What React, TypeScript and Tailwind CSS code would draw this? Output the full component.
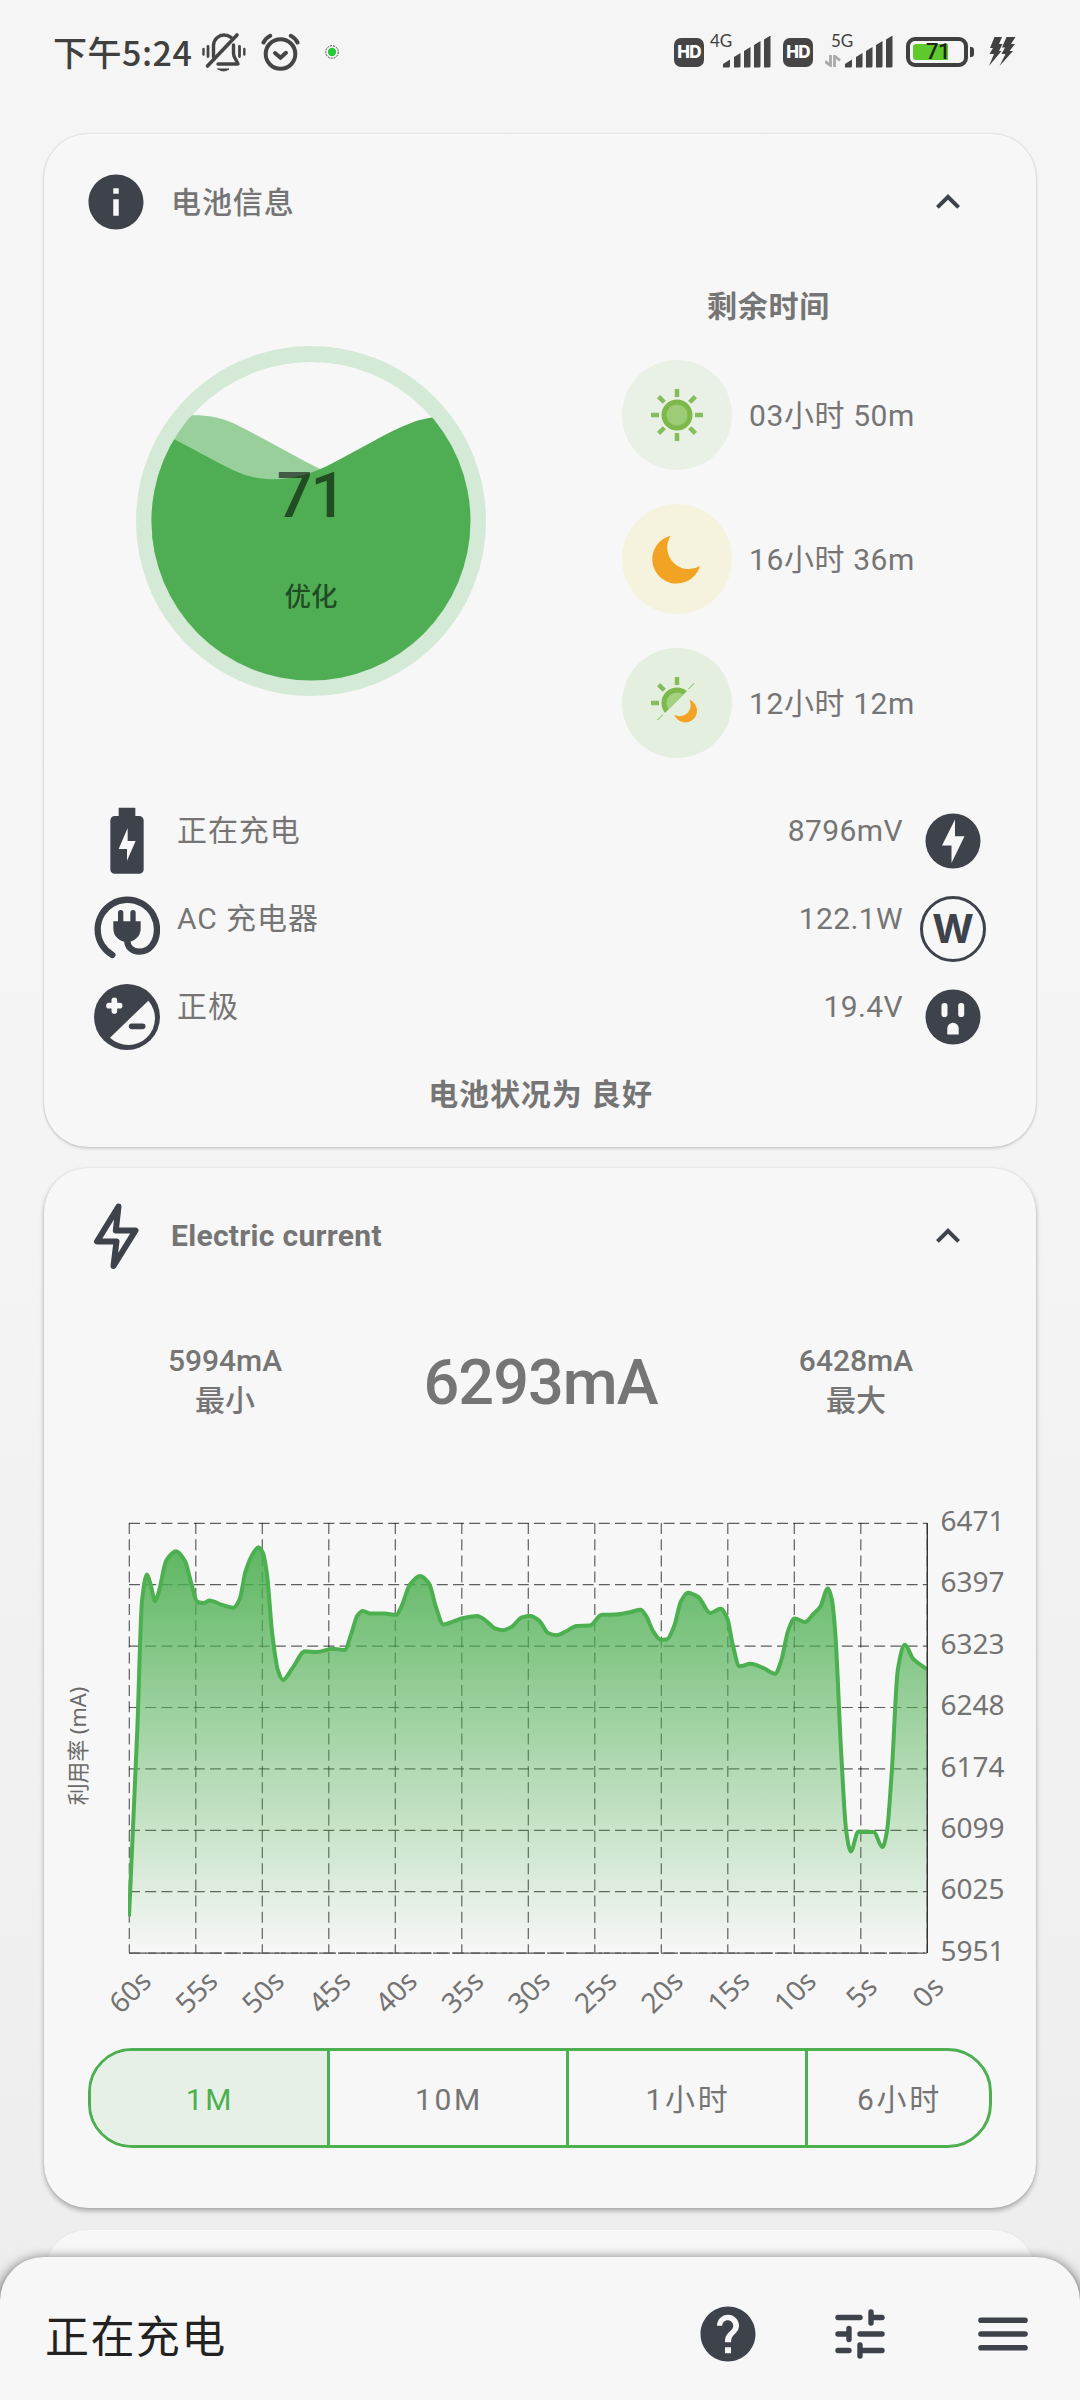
import React from 'react';

type Point = [number, number];

const INK = '#3e424b';

const samples: Point[] = [
  [0, 367], [8.3, 193], [13, 73], [18, 48], [21.5, 57], [26.2, 73], [29.6, 64.7], [37.5, 34.7], [47.2, 26.4],
  [56.1, 35.7], [62.3, 56.4], [68.5, 73.7], [74.4, 74.7], [80.2, 72.4], [93.3, 76.4], [104.3, 79], [110.5, 71.4],
  [116.7, 44.7], [124.3, 28], [129.5, 22.7], [134, 28], [138, 48], [143.2, 103], [149.1, 138], [153.9, 146.4],
  [163.9, 134.7], [176, 119.7], [188, 120.4], [203.5, 117.4], [215.6, 118.4], [222.4, 103], [228.3, 86.4],
  [233.8, 82], [241.4, 84.4], [255.2, 84.4], [267.2, 85.7], [272.4, 78], [281, 57.4], [291, 49.4], [300, 56.4],
  [306.8, 78], [314.4, 94.7], [324, 92], [334.4, 88.7], [348.1, 86.7], [358.5, 92.4], [365.3, 98], [374, 100],
  [382.6, 97], [392.9, 88], [401.5, 86.7], [410.5, 91.4], [419, 102.6], [427, 104.7], [437.2, 101], [447.5, 96],
  [460.7, 95.7], [472.8, 85.7], [486.6, 85.4], [502, 83], [511.4, 81], [516.9, 86.4], [524.4, 101.4], [532, 109],
  [538.2, 108.4], [545.1, 96.4], [552, 73], [558.9, 65], [569.2, 69], [581.3, 84], [591.6, 80], [598.5, 89.7],
  [603.6, 113], [610.5, 133.7], [621.5, 131.4], [634.6, 135.4], [646, 140.7], [651.8, 129.7], [659.4, 99.7],
  [665.6, 89], [676, 92.4], [684.6, 84.7], [691.4, 78], [698.7, 61], [702.8, 71.4], [706.3, 103], [712.1, 213],
  [717.3, 288], [721.8, 306.4], [729.3, 288], [744.8, 288.4], [753.4, 302.4], [757.9, 288], [762.7, 233],
  [768.9, 136.4], [775.8, 113.7], [784.4, 127], [798, 136.4],
];

/** Monotone cubic path through the samples, so peaks never overshoot. */
function smoothPath(p: Point[]): string {
  const n = p.length;
  const slope = (i: number) => (p[i + 1][1] - p[i][1]) / (p[i + 1][0] - p[i][0]);
  const m = p.map((_, i) => {
    if (i === 0) return slope(0);
    if (i === n - 1) return slope(n - 2);
    const a = slope(i - 1);
    const b = slope(i);
    return a * b <= 0 ? 0 : (2 * a * b) / (a + b);
  });
  let d = `M${p[0][0]} ${p[0][1]}`;
  for (let i = 0; i < n - 1; i++) {
    const h = (p[i + 1][0] - p[i][0]) / 3;
    d += `C${p[i][0] + h} ${p[i][1] + m[i] * h} ${p[i + 1][0] - h} ${p[i + 1][1] - m[i + 1] * h} ${p[i + 1][0]} ${p[i + 1][1]}`;
  }
  return d;
}

const PLOT_HEIGHT = 429.8;
const ROW = PLOT_HEIGHT / 7;
const linePath = smoothPath(samples.map(([x, y]): Point => [x, (y * PLOT_HEIGHT) / 401]));
const yLabels = ['6471', '6397', '6323', '6248', '6174', '6099', '6025', '5951'];
const xLabels = ['60s', '55s', '50s', '45s', '40s', '35s', '30s', '25s', '20s', '15s', '10s', '5s', '0s'];

function Chart() {
  return (
    <svg className="block overflow-visible" width="992" height="550" viewBox="-85 -40 992 550">
      <defs>
        <linearGradient id="area" gradientUnits="userSpaceOnUse" x1="0" y1="0" x2="0" y2={PLOT_HEIGHT}>
          <stop offset="0" stopColor="#4caf50" stopOpacity="0.95" />
          <stop offset="1" stopColor="#4caf50" stopOpacity="0" />
        </linearGradient>
        <clipPath id="plot">
          <rect x="-1" y="0" width="799.5" height="431" />
        </clipPath>
      </defs>
      <g stroke="#000" strokeOpacity="0.62" strokeWidth="1.2" strokeDasharray="11 5.2">
        {xLabels.map((l, i) => (
          <line key={l} x1={i * 66.5 + 0.3} y1="0" x2={i * 66.5 + 0.3} y2={PLOT_HEIGHT} />
        ))}
        {yLabels.map((l, i) => (
          <line key={l} x1="0" y1={i * ROW + 0.3} x2="798" y2={i * ROW + 0.3} />
        ))}
      </g>
      <path d={`${linePath}L798 ${PLOT_HEIGHT}L0 ${PLOT_HEIGHT}Z`} fill="url(#area)" />
      <path d={linePath} fill="none" stroke="#4caf50" strokeWidth="4" strokeLinejoin="round" clipPath="url(#plot)" />
      <path d="M798.3 0V430" fill="none" stroke="#333" strokeWidth="1.4" />
      <path d="M0 430.2H798" fill="none" stroke="#555" strokeWidth="1.2" strokeDasharray="17 2" />
      <g fontFamily="'Noto Sans', sans-serif" fontSize="28" fill="#737373">
        {yLabels.map((l, i) => (
          <text key={l} x="811.5" y={i * ROW + 8}>{l}</text>
        ))}
        {xLabels.map((l, i) => (
          <text key={l} textAnchor="middle" transform={`translate(${i * 66.5 + 8} ${476}) rotate(-45)`}>{l}</text>
        ))}
      </g>
      <text
        transform="translate(-43.5 223) rotate(-90)"
        textAnchor="middle"
        fontFamily="'Noto Sans', 'Noto Sans CJK SC', sans-serif"
        fontSize="21.800"
        fill="#6a6a6a"
      >
        利用率 (mA)
      </text>
    </svg>
  );
}

function Chevron() {
  return (
    <svg width="48" height="48" viewBox="0 0 24 24" fill={INK}>
      <path d="M12 8l-6 6 1.41 1.41L12 10.83l4.59 4.58L18 14z" />
    </svg>
  );
}

function SignalBars() {
  return (
    <svg width="48" height="32" viewBox="0 0 48 32" fill="#454545">
      <path d="M0 31.500V28l7-4.500V30q0 1.500-1.500 1.500z" />
      <path d="M11 31.500V21l6.500-4V30q0 1.500-1.500 1.500H11z" />
      <path d="M21 31.500V15l6.500-4V30q0 1.500-1.500 1.500H21z" />
      <path d="M31 31.500V9l6.500-4V30q0 1.500-1.500 1.500H31z" />
      <path d="M41 31.500V3.500l6.500-4V30q0 1.500-1.500 1.500H41z" />
    </svg>
  );
}

function HdBadge() {
  return (
    <div className="flex h-[29px] w-[30px] items-center justify-center rounded-[7px] bg-[#454545] font-['Inter','Liberation_Sans',sans-serif] text-[17px] font-extrabold leading-none tracking-[-0.8px] text-white">
      HD
    </div>
  );
}

function StatusBar() {
  return (
    <header className="flex h-[104px] items-center justify-between pl-[53px] pr-[64px] text-[#404040]">
      <div className="flex items-center">
        <span className="w-[149px] whitespace-nowrap font-['Noto_Sans_CJK_SC',sans-serif] text-[34px] font-medium leading-[48px] tracking-[0.5px]">下午5:24</span>
        <svg width="44" height="40" viewBox="0 0 44 40" fill="none" stroke="#454545" strokeWidth="3.4" strokeLinecap="round" strokeLinejoin="round">
          <path d="M5.500 34L35 3" strokeWidth="3.600" />
          <path d="M11.500 25V13C12 7 17 3 22 3c2.500 0 5 .8 7 2.300" />
          <path d="M31.500 13v8.500c0 4 3 6 4.500 10.500H16" />
          <path d="M16 37h11q-5.500 4-11 0z" fill="#454545" strokeWidth="1" />
          <path d="M6 14.500v10M37.500 14.500v10" strokeWidth="2.800" />
          <path d="M1.500 17v5.500M42.300 17v5.500" strokeWidth="2.400" />
        </svg>
        <svg className="ml-[15px]" width="40" height="40" viewBox="0 0 40 40" fill="none" stroke="#454545" strokeWidth="4" strokeLinecap="round" strokeLinejoin="round">
          <circle cx="19.500" cy="22" r="14.800" />
          <path d="M14 21l5.500 4.800 5.500-5" />
          <path d="M2.500 10.500c1.500-3 3.700-5.200 6.700-6.700M36.500 10.500c-1.500-3-3.700-5.200-6.700-6.700" />
        </svg>
        <svg className="ml-[24px]" width="14" height="14" viewBox="0 0 14 14">
          <circle cx="7" cy="7" r="6.300" fill="none" stroke="#333" strokeWidth="0.900" strokeDasharray="2 1" />
          <circle cx="7" cy="7" r="4.200" fill="#28c83c" />
        </svg>
      </div>
      <div className="flex items-center">
        <HdBadge />
        <div className="relative ml-[19px] h-[32px] w-[48px]">
          <SignalBars />
          <span className="absolute left-[-13px] top-[-4px] font-['Lato',sans-serif] text-[17px] leading-none">4G</span>
        </div>
        <div className="ml-[12px]"><HdBadge /></div>
        <div className="relative ml-[32px] h-[32px] w-[48px]">
          <SignalBars />
          <span className="absolute left-[-14px] top-[-4px] font-['Lato',sans-serif] text-[17px] leading-none">5G</span>
          <svg className="absolute left-[-20px] top-[19px]" width="17" height="12" viewBox="0 0 17 12" fill="none" stroke="#aaa" strokeWidth="2.800">
            <path d="M0 6.500l5.500 4V0M9.500 12V1l5.500 4.500" />
          </svg>
        </div>
        <div className="ml-[13px] flex items-center">
          <div className="relative h-[30px] w-[62px] rounded-[9px] border-4 border-[#404040]">
            <div className="absolute left-[3px] top-[3px] h-[16px] w-[35px] rounded-l-[3px] bg-[#5ec92a]" />
            <span className="absolute left-[16px] top-[1px] font-['Roboto',sans-serif] text-[22px] font-medium leading-[20px] tracking-[-0.5px] text-[#222]">71</span>
          </div>
          <div className="ml-[2px] h-[10px] w-[4px] rounded-r-[3px] bg-[#404040]" />
        </div>
        <svg className="ml-[14px]" width="28" height="30" viewBox="0 0 28 30" fill="#404040">
          <path d="M6.500 0H14L11 7H14.500L11 14H13.500L1 29L6 17H1.500L5 11H2Z" />
          <path d="M18.500 0H27.500L23 7H27L21.500 14H25L11.500 29L17.500 17H13.500L17 10.500H14Z" />
        </svg>
      </div>
    </header>
  );
}

function LevelGauge() {
  return (
    <svg width="350" height="350" viewBox="136 346 350 350">
      <defs>
        <clipPath id="bowl">
          <circle cx="311" cy="521" r="159.500" />
        </clipPath>
      </defs>
      <circle cx="311" cy="521" r="167" fill="none" stroke="#d4e9d6" strokeWidth="16" />
      <g clipPath="url(#bowl)">
        <path d="M150 424C172 414 207 411 233 423C262 437 292 455 322 470V560H150Z" fill="#4caf50" fillOpacity="0.55" />
        <path d="M150 427C190 446 225 468 245 475C275 484 302 478 327 466C357 451 385 433 411 423C428 416 450 414 480 420V690H150Z" fill="#4fae53" />
      </g>
      <text x="310.500" y="516.500" textAnchor="middle" fontFamily="Roboto, sans-serif" fontSize="63" fontWeight="500" letterSpacing="-2" fill="#000" fillOpacity="0.56">71</text>
      <text x="311" y="606" textAnchor="middle" fontFamily="'Noto Sans CJK SC', sans-serif" fontSize="26.500" fontWeight="500" fill="#000" fillOpacity="0.58">优化</text>
    </svg>
  );
}

function Sun() {
  return (
    <svg width="54" height="54" viewBox="-27 -27 54 54">
      <circle r="15.500" fill="#7cb84a" />
      <circle r="10.500" fill="#9ccc76" />
      {[0, 45, 90, 135, 180, 225, 270, 315].map((a) => (
        <path key={a} d="M0-26V-18" stroke="#86bd5b" strokeWidth="4.500" transform={`rotate(${a})`} />
      ))}
    </svg>
  );
}

function Moon() {
  return (
    <svg width="54" height="54" viewBox="212 784 162 162" fill="#f2a324">
      <path d="M274 795A73 73 0 1 0 362 886A65 65 0 0 1 274 795Z" />
    </svg>
  );
}

function SunMoon() {
  return (
    <svg width="54" height="54" viewBox="-27 -27 54 54">
      <clipPath id="halfSky">
        <path d="M-30 -30H28L-30 28Z" />
      </clipPath>
      <g clipPath="url(#halfSky)">
        <circle r="15.500" fill="#7cb84a" />
        <circle r="10.500" fill="#a2d182" />
        {[0, 45, 225, 270, 315].map((a) => (
          <path key={a} d="M0-26V-18" stroke="#86bd5b" strokeWidth="4.500" transform={`rotate(${a})`} />
        ))}
      </g>
      <path d="M12.300 -3.300A11.700 11.700 0 1 1 -2.700 11.700A11 11 0 0 0 12.300 -3.300Z" fill="#f2a324" />
    </svg>
  );
}

function TimeRow({ icon, tone, text }: { icon: React.ReactNode; tone: string; text: string }) {
  return (
    <div className="flex h-[144px] items-center">
      <div className={`flex h-[110px] w-[110px] shrink-0 items-center justify-center rounded-full ${tone}`}>{icon}</div>
      <span className="ml-[17px] whitespace-nowrap text-[30px] tracking-[0.6px]">{text}</span>
    </div>
  );
}

function BatteryIcon() {
  return (
    <svg width="80" height="80" viewBox="0 0 24 24" fill={INK} fillRule="evenodd">
      <path d="M15.670 4.500H14.500V2h-5v2.500H8.330C7.600 4.500 7 5.100 7 5.830v14.700C7 21.300 7.600 21.800 8.330 21.800h7.330c.74 0 1.340-.5 1.340-1.270V5.830C17 5.100 16.400 4.500 15.670 4.500zM12 17.900v-3.500H9.500L12.200 8.100V12h2.400z" />
    </svg>
  );
}

function PlugIcon() {
  return (
    <svg width="66" height="66" viewBox="162 354 198 198" fill="none" stroke={INK} strokeWidth="19" strokeLinecap="round">
      <path d="M217 531A89 89 0 1 1 351 453C351 493 329 521 298 521C276 521 262 506 262 488" />
      <path d="M220 430H302V452A41 40 0 0 1 220 452Z" fill={INK} stroke="none" />
      <path d="M242 404V432M279 404V432" strokeWidth="16" />
    </svg>
  );
}

function PolarityIcon() {
  return (
    <svg width="66" height="66" viewBox="162 612 198 198">
      <circle cx="261" cy="711" r="99" fill={INK} />
      <path d="M325 662A80 80 0 0 1 210 773Z" fill="#f7f7f7" />
      <path d="M223 661V693M207 677H239" stroke="#f7f7f7" strokeWidth="17" strokeLinecap="round" />
      <path d="M275 739H308" stroke={INK} strokeWidth="17" strokeLinecap="round" />
    </svg>
  );
}

function BoltCircle() {
  return (
    <svg width="66" height="66" viewBox="0 0 66 66">
      <circle cx="33" cy="33" r="27.500" fill={INK} />
      <path d="M35 11.500L22 37.500H31.500V55L44.500 28.300H35Z" fill="#f7f7f7" />
    </svg>
  );
}

function WattCircle() {
  return (
    <span className="flex h-[66px] w-[66px] items-center justify-center rounded-full border-[3px] border-[#3e424b] font-['Inter',sans-serif] text-[40px] font-bold leading-none text-[#3e424b]">
      W
    </span>
  );
}

function OutletCircle() {
  return (
    <svg width="66" height="66" viewBox="0 0 66 66">
      <circle cx="33" cy="33" r="27.500" fill={INK} />
      <g fill="#f7f7f7">
        <rect x="21.500" y="19" width="6" height="14" rx="2.800" />
        <rect x="38.200" y="19" width="6" height="14" rx="2.800" />
        <path d="M27.300 50V44.500a5.700 5.700 0 0 1 11.400 0V50q0 .5-.5.5H27.800q-.5 0-.5-.5z" />
      </g>
    </svg>
  );
}

function StatRow({ left, label, value, right }: { left: React.ReactNode; label: string; value: string; right: React.ReactNode }) {
  return (
    <div className="flex h-[88px] items-center text-[30px]">
      <div className="flex w-[80px] justify-center">{left}</div>
      <span className="ml-[10px] -mt-[22px] tracking-[0.9px]">{label}</span>
      <span className="ml-auto mr-[17px] -mt-[22px] tracking-[0.4px]">{value}</span>
      <div className="flex w-[66px] justify-center">{right}</div>
    </div>
  );
}

function Reading({ value, label }: { value: string; label: string }) {
  return (
    <div className="-mt-[3px] flex w-[230px] flex-col items-center text-[30px] leading-[40px]">
      <span className="font-medium">{value}</span>
      <span className="font-medium">{label}</span>
    </div>
  );
}

const cardClass = 'mx-[44px] rounded-[44px] bg-[#f7f7f7]';

export default function App() {
  return (
    <div className="relative flex h-[2400px] w-[1080px] flex-col overflow-hidden bg-linear-to-b from-[#f5f5f5] from-40% to-[#ededed] font-['Roboto','Noto_Sans_CJK_SC',sans-serif] text-[#757575]">
      <StatusBar />

      <section className={`${cardClass} mt-[30px] h-[1013px] shadow-[0_0_2px_rgba(0,0,0,0.22),0_2px_3px_rgba(0,0,0,0.12)]`}>
        <div className="flex h-[134px] items-center pl-[39px] pr-[64px] pt-[1px]">
          <svg width="66" height="66" viewBox="0 0 24 24" fill={INK}>
            <path d="M12 2C6.480 2 2 6.480 2 12s4.480 10 10 10 10-4.480 10-10S17.520 2 12 2zm1 15h-2v-6h2v6zm0-8h-2V7h2v2z" />
          </svg>
          <h2 className="ml-[22px] flex-1 pt-[1px] text-[30px] font-medium tracking-[0.9px]">电池信息</h2>
          <Chevron />
        </div>
        <div className="flex h-[529px]">
          <div className="ml-[92px] mt-[78px] w-[350px]">
            <LevelGauge />
          </div>
          <div className="ml-[136px] w-[292px]">
            <div className="flex h-[75px] items-center justify-center pl-[1px] pt-[1px] text-[30px] font-bold tracking-[0.7px]">剩余时间</div>
            <TimeRow icon={<Sun />} tone="bg-[#e9f0e5]" text="03小时 50m" />
            <TimeRow icon={<Moon />} tone="bg-[#f5f3dd]" text="16小时 36m" />
            <TimeRow icon={<SunMoon />} tone="bg-[#e4efe0]" text="12小时 12m" />
          </div>
        </div>
        <div className="pl-[43px] pr-[50px]">
          <StatRow left={<BatteryIcon />} label="正在充电" value="8796mV" right={<BoltCircle />} />
          <StatRow left={<PlugIcon />} label="AC 充电器" value="122.1W" right={<WattCircle />} />
          <StatRow left={<PolarityIcon />} label="正极" value="19.4V" right={<OutletCircle />} />
        </div>
        <p className="mt-[11px] pl-[1px] text-center text-[30px] font-bold leading-[46px] tracking-[0.9px]">电池状况为 良好</p>
      </section>

      <section className={`${cardClass} mt-[21px] h-[1040px] shadow-[0_0_2px_rgba(0,0,0,0.12),0_3px_5px_rgba(0,0,0,0.28)]`}>
        <div className="flex h-[134px] items-center pl-[39px] pr-[64px] pt-[1px]">
          <svg width="66" height="66" viewBox="83 1202 66 66" fill="none" stroke={INK} strokeWidth="6" strokeLinejoin="round">
            <path d="M118.500 1205.500L97 1240.500H116.500L113.500 1265L135.500 1229.500H115.800Z" />
          </svg>
          <h2 className="ml-[22px] flex-1 text-[30px] font-bold tracking-[0.3px]">Electric current</h2>
          <Chevron />
        </div>
        <div className="flex h-[156px] items-center justify-between pl-[66px] pr-[65px] pt-[5px]">
          <Reading value="5994mA" label="最小" />
          <span className="text-[63px] font-medium leading-[76px] tracking-[-1px]">6293mA</span>
          <Reading value="6428mA" label="最大" />
        </div>
        <div className="mt-[25px]"><Chart /></div>
        <div className="ml-[44px] mt-[15px] grid h-[100px] w-[904px] grid-cols-[239px_239px_239px_1fr] overflow-hidden rounded-[44px] border-[3px] border-[#4caf50] text-[30px] tracking-[2.7px] *:pl-[2px] *:pt-[2px]">
          <div className="flex items-center justify-center border-r-[3px] border-[#4caf50] bg-[#e7f0e7] text-[#4caf50]">1M</div>
          <div className="flex items-center justify-center border-r-[3px] border-[#4caf50]">10M</div>
          <div className="flex items-center justify-center border-r-[3px] border-[#4caf50]">1小时</div>
          <div className="flex items-center justify-center">6小时</div>
        </div>
      </section>

      <section className={`${cardClass} mt-[22px] h-[120px] shrink-0 shadow-[0_0_3px_rgba(0,0,0,0.05)]`} />

      <footer className="absolute inset-x-0 bottom-0 flex h-[143px] items-center rounded-t-[44px] bg-[#f7f7f7] pl-[45px] pr-[44px] pt-[11px] shadow-[0_0_10px_rgba(0,0,0,0.2),0_6px_16px_rgba(0,0,0,0.7)]">
        <span className="flex-1 font-['Noto_Sans_CJK_SC',sans-serif] text-[44px] leading-[64px] tracking-[1.4px] text-[#222]">正在充电</span>
        <svg className="mr-[66px]" width="66" height="66" viewBox="0 0 24 24" fill={INK}>
          <path d="M12 2C6.480 2 2 6.480 2 12s4.480 10 10 10 10-4.480 10-10S17.520 2 12 2zm1.100 17h-2.200v-2.200h2.200V19zm2.070-7.750l-.9.920c-.72.730-1.170 1.330-1.170 2.830h-2.200v-.5c0-1.100.45-2.100 1.170-2.830l1.240-1.260c.37-.36.59-.86.59-1.410 0-1.100-.9-2-2-2s-2 .9-2 2H8c0-2.210 1.790-4 4-4s4 1.790 4 4c0 .88-.36 1.680-.93 2.250z" />
        </svg>
        <svg className="mr-[77px]" width="66" height="66" viewBox="827 2301 66 66" fill="none" stroke={INK} strokeWidth="5.400" strokeLinecap="round">
          <path d="M838 2317.500H860M871 2312V2323M871 2317.500H882" />
          <path d="M838 2334H849M849 2328.500V2339.500M860 2334H882" />
          <path d="M838 2350.500H849M860 2345V2356M860 2350.500H882" />
        </svg>
        <svg width="66" height="66" viewBox="970 2301 66 66" fill="none" stroke={INK} strokeWidth="5.600" strokeLinecap="round">
          <path d="M981 2320.300H1025M981 2334H1025M981 2347.700H1025" />
        </svg>
      </footer>
    </div>
  );
}
